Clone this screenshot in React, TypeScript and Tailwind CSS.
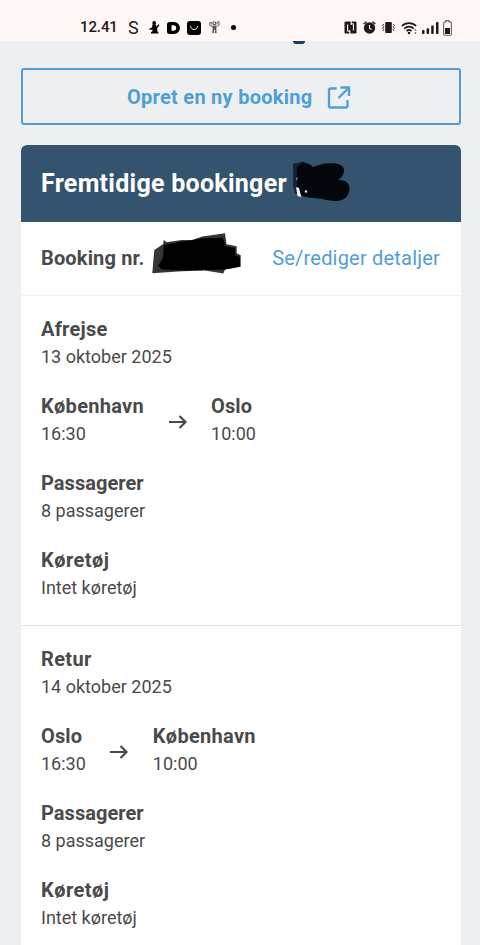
import type { ReactNode } from "react";

type Stop = { city: string; time: string };

type Journey = {
  label: string;
  date: string;
  from: Stop;
  to: Stop;
  passengers: string;
  vehicle: string;
};

const journeys: Journey[] = [
  {
    label: "Afrejse",
    date: "13 oktober 2025",
    from: { city: "København", time: "16:30" },
    to: { city: "Oslo", time: "10:00" },
    passengers: "8 passagerer",
    vehicle: "Intet køretøj",
  },
  {
    label: "Retur",
    date: "14 oktober 2025",
    from: { city: "Oslo", time: "16:30" },
    to: { city: "København", time: "10:00" },
    passengers: "8 passagerer",
    vehicle: "Intet køretøj",
  },
];

const StatusBar = () => (
  <header className="flex h-[41px] shrink-0 items-center bg-[#fff7f5] pt-[14px] pl-[80px] text-[#1c1a1a]">
    <span className="w-[48px] text-[15px] leading-[27px] font-medium tracking-[-0.1px]">12.41</span>
    <span className="w-[20px] text-[18px] leading-[27px]">S</span>
    {/* kneeling figure */}
    <svg className="mr-2 ml-px h-[13px] w-[11px]" viewBox="0 0 11 13" fill="#000">
      <circle cx="5.2" cy="2" r="1.9" />
      <path d="M3.5 3.5h3l1 2 2-2.3 1 .8-2.300 3.200.2 3.200 1 .5v1.600H2v-1.500l1.300-.6.2-2L.5 9V7.500l2.500-1z" />
    </svg>
    <svg className="mr-[7px] -ml-px h-[12px] w-[13px]" viewBox="0 0 13 12">
      <path d="M2.500 0H7a6 6 0 0 1 0 12H2.500A2.500 2.500 0 0 1 0 9.500v-7A2.500 2.500 0 0 1 2.500 0Z" fill="#000" />
      <path d="M4.500 3.300h2a2.700 2.700 0 0 1 0 5.400h-2z" fill="#fff7f5" />
    </svg>
    <svg className="mr-2 h-[14px] w-[14px]" viewBox="0 0 14 14">
      <rect width="14" height="14" rx="3" fill="#000" />
      <path d="M3.500 5.500c.8 4.200 6.200 4.200 7 0" fill="none" stroke="#fff7f5" strokeWidth="1" strokeLinecap="round" />
    </svg>
    <svg className="mr-[11px] h-[13px] w-[11px] text-[#5b5756]" viewBox="0 0 11 13" fill="currentColor">
      <path d="M3.500 4.500h4l-.3 2 .5 5.500H6V9H5v3H3.200l.5-5.500z" />
      <path d="M.7 4.500.9 1.500h2v2M4.200 1h2.500v2.500H4.200zM8 3.500v-2l2-1V4M1 4.500 4 6M10 4 7.500 6" fill="none" stroke="currentColor" strokeWidth="1" />
    </svg>
    <span className="h-[5px] w-[5px] rounded-full bg-black" />

    <div className="mr-[28px] ml-auto flex items-center">
      <svg className="mr-[6px] h-[13px] w-[13px]" viewBox="0 0 13 13">
        <rect x=".5" y=".5" width="12" height="12" rx="1.200" fill="currentColor" />
        <path d="M3.600 10.300V3.500M9.400 9.500V2.700M5.300 10.300h-1.700M7.700 2.700h1.700M5.800 13v-4M7.200 0v4" fill="none" stroke="#fff7f5" strokeWidth="1.100" />
      </svg>
      <svg className="mr-[6px] h-[13px] w-[13px]" viewBox="0 0 13 13">
        <circle cx="6.500" cy="7" r="5.700" fill="currentColor" />
        <path d="M.7 3 3.500.8M12.300 3 9.500.8" stroke="currentColor" strokeWidth="1.500" />
        <path d="M6.500 4v3.200l2 1.300" fill="none" stroke="#fff7f5" strokeWidth="1.100" />
      </svg>
      <svg className="mr-[6px] h-[13px] w-[13px]" viewBox="0 0 13 13">
        <rect x="3.200" y="1" width="6.600" height="11" rx=".8" fill="currentColor" />
        <path d="M1.800 3 .6 4.300l1.200 1.400L.6 7.100l1.200 1.400L.8 10M11.200 3l1.200 1.300-1.200 1.400 1.200 1.400-1.200 1.400 1 1.500" fill="none" stroke="currentColor" strokeWidth=".9" />
      </svg>
      <svg className="mr-1 h-[14px] w-[17px]" viewBox="0 0 17 14" fill="none" stroke="currentColor" strokeWidth="1.700">
        <path d="M.8 5a10.400 10.400 0 0 1 14.400 0M3.200 7.600a7 7 0 0 1 9.600 0M5.500 10a3.700 3.700 0 0 1 5 0" />
        <circle cx="8" cy="12" r="1.300" fill="currentColor" stroke="none" />
        <path d="M13.400 9.500 14.500 8l1.100 1.500zM13.400 11.500l1.100 1.500 1.100-1.500z" fill="currentColor" stroke="none" />
      </svg>
      <svg className="mr-[4px] h-[12px] w-[17px]" viewBox="0 0 17 12" fill="currentColor">
        <rect x="0" y="8" width="2.500" height="4" rx=".8" />
        <rect x="4.600" y="6.200" width="2.500" height="5.800" rx=".8" />
        <rect x="9.200" y="3.500" width="2.500" height="8.500" rx=".8" />
        <rect x="14" y="0" width="2.500" height="12" rx=".8" />
      </svg>
      <svg className="h-[16px] w-[9px]" viewBox="0 0 9 16">
        <path d="M3 .6h3v1.300H7A1.400 1.400 0 0 1 8.400 3.300v10.600A1.400 1.400 0 0 1 7 15.300H2A1.400 1.400 0 0 1 .6 13.900V3.300A1.400 1.400 0 0 1 2 1.900h1z" fill="none" stroke="#666" strokeWidth="1.100" />
        <rect x="2" y="8" width="5" height="6" fill="currentColor" />
      </svg>
    </div>
  </header>
);

const Arrow = () => (
  <svg className="mx-[21.5px] mt-[3px] h-6 w-6 shrink-0" viewBox="0 0 24 24" fill="none" stroke="currentColor" strokeWidth="2.200">
    <path d="M3 12h16.500M13.500 6l6 6-6 6" />
  </svg>
);

const tracking: Record<string, string> = {
  Afrejse: "tracking-[0.25px]",
  Retur: "tracking-[0.35px]",
  København: "tracking-[0.3px]",
  Oslo: "tracking-[0.1px]",
  Passagerer: "tracking-[0.05px]",
  Køretøj: "tracking-[0.45px]",
};

const Field = ({ title, children }: { title: string; children: ReactNode }) => (
  <div className="text-[18px] leading-7">
    <h3 className={`text-[20px] leading-7 font-bold ${tracking[title]}`}>{title}</h3>
    <p>{children}</p>
  </div>
);

const JourneySection = ({ journey }: { journey: Journey }) => (
  <section className="flex h-[330px] shrink-0 flex-col gap-[21px] border-t border-[#dfe2e4] px-[20.5px] pt-[19px] first-of-type:border-[#eff1f2]">
    <Field title={journey.label}>{journey.date}</Field>
    <div className="flex items-center">
      <Field title={journey.from.city}>{journey.from.time}</Field>
      <Arrow />
      <Field title={journey.to.city}>{journey.to.time}</Field>
    </div>
    <Field title="Passagerer">{journey.passengers}</Field>
    <Field title="Køretøj">{journey.vehicle}</Field>
  </section>
);

const App = () => (
  <div className="flex h-[945px] w-[480px] flex-col overflow-hidden bg-[#edeff1] font-[Roboto,sans-serif] text-[#4a4a4a]">
    <StatusBar />
    <main className="flex flex-col pr-[19.5px] pl-[20.5px]">
      {/* tail of the page heading scrolled under the status bar */}
      <div className="ml-[272px] h-[3px] w-[12px] rounded-b-full bg-[#1c3a5c]" />

      <button className="mt-[24px] flex h-[57px] items-center justify-center rounded-[3px] border-2 border-[#4f9fd6] pr-[3px] text-[20px] font-bold text-[#4f9fd6]">
        <span className="tracking-[0.27px]">Opret en ny booking</span>
        <svg className="ml-[14.5px] h-6 w-6" viewBox="0 0 24 24" fill="none" stroke="currentColor" strokeWidth="2.300">
          <path d="M9.500 3.500h-6A1.500 1.500 0 0 0 2 5v16a1.500 1.500 0 0 0 1.500 1.500H19a1.500 1.500 0 0 0 1.500-1.500v-6M13.500 2.500H22V11M21.500 3 11.500 13" />
        </svg>
      </button>

      <article className="mt-5 flex flex-col overflow-hidden rounded-t-[6px] bg-white">
        <h2 className="flex h-[77px] shrink-0 items-center bg-[#34536f] pl-[20.5px] text-[25px] font-bold text-white">
          <span className="w-[251px] tracking-[0.27px] whitespace-nowrap">Fremtidige bookinger</span>
          {/* count, smudged over with a soft marker */}
          <svg className="-mt-1 h-[42px] w-[60px] overflow-visible blur-[0.6px]" viewBox="0 0 60 42">
            <path d="M1 2.500 5 2l6-1.500 9 4-8 31-9-3-2-8z" fill="#0a1420" opacity=".75" />
            <path d="M5 6 11 1.500l6 1.500 4 3c5-2 11-4 17-3.800 8-.4 14 2 14 6.800 0 5-3 8-6 10 7-.5 11.500 3 11.500 8.500 0 7-5 12-12 12.500-6 .3-11-1-15-2l-14-1.500C8 36 5 31 4 27z" fill="#03070b" />
            <path d="M6 16c-2 4-2 6-1.500 10l-.2-9z" fill="#b9c0c6" />
            <path d="m4 26 1.500 9 3.800 1L7 27z" fill="#f4f6f8" />
            <circle cx="14" cy="30.500" r="1.300" fill="#d5dade" />
          </svg>
        </h2>

        <div className="flex h-[73px] shrink-0 items-center px-[20.5px] pb-px text-[20px]">
          <span className="w-[110px] font-bold tracking-[0.15px] whitespace-nowrap">Booking nr.</span>
          {/* booking number, same marker */}
          <svg className="-mt-2 h-[42px] w-[92px] overflow-visible blur-[0.7px]" viewBox="0 0 92 42">
            <path d="M1.300 40.300 3.300 17l9-6 .4-4 3 2.300 15-2.300 10 .2 10.600-3.700L74 .3l1.500 11 10.200 2v7l4 2v11.500L74 36.500l-1.700 4L54 37.500l-23.300.7z" fill="#111" opacity=".85" />
            <path d="M7 33 12 25l1-13 18-3.500 20-3 21-1 2 8.500 10 2v7l5 2v9.500l-15 3-19 .5-24 .5-20-1z" fill="#000" />
            <path d="M4 20c3-4 6-1 3.500 2.500L5 26.500" fill="none" stroke="#444" strokeWidth="1" />
          </svg>
          <a className="ml-auto tracking-[0.2px] text-[#4f9fd6]">Se/rediger detaljer</a>
        </div>

        {journeys.map((j) => (
          <JourneySection key={j.label} journey={j} />
        ))}
      </article>
    </main>
  </div>
);

export default App;
